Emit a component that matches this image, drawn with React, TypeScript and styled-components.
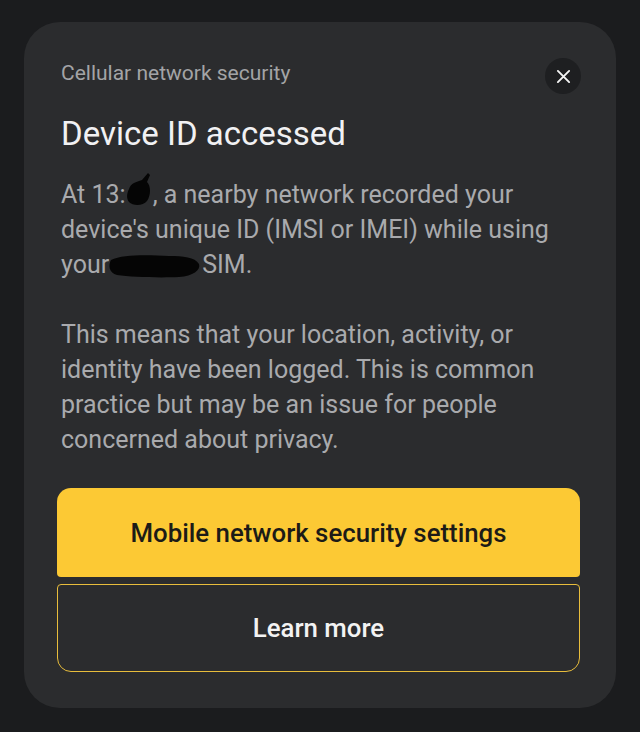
import React from "react";
import styled, { createGlobalStyle } from "styled-components";

const GlobalStyle = createGlobalStyle`
  html, body {
    margin: 0;
    padding: 0;
    background: #1b1c1e;
  }
  body {
    font-family: Roboto, "Noto Sans", sans-serif;
  }
`;

const Page = styled.div`
  width: 640px;
  height: 732px;
  box-sizing: border-box;
  padding: 22px 24px 24px;
  background: #1b1c1e;
`;

const Card = styled.section`
  background: #2b2c2e;
  border-radius: 36px;
  padding: 36px 36px 36px 37px;
  display: flex;
  flex-direction: column;
`;

const Header = styled.div`
  display: flex;
  justify-content: space-between;
  align-items: center;
  height: 36px;
`;

const Eyebrow = styled.div`
  font-size: 21px;
  color: #a3a4a6;
  padding-bottom: 6px;
`;

const CloseButton = styled.button`
  width: 36px;
  height: 36px;
  border-radius: 50%;
  border: none;
  background: #1e1f21;
  display: flex;
  align-items: center;
  justify-content: center;
  padding: 0;
  margin-right: -1px;
`;

const Title = styled.h1`
  margin: 20px 0 0;
  font-size: 33px;
  line-height: 39px;
  font-weight: 400;
  color: #f1f1f3;
`;

const Body = styled.p<{ $top: number }>`
  margin: ${(p) => p.$top}px 0 0;
  font-size: 25px;
  line-height: 35px;
  color: #a9aaad;
  width: 530px;
`;

/* ink blot drawn over redacted parts; overflow keeps the tail out of the line box */
const Blot = styled.svg`
  display: inline-block;
  vertical-align: -4px;
  overflow: visible;
  margin-right: 1px;
`;

const Actions = styled.div`
  display: flex;
  flex-direction: column;
  gap: 7px;
  margin-top: 31px;
  margin-left: -4px;
`;

const Button = styled.button<{ $primary?: boolean }>`
  height: ${(p) => (p.$primary ? 89 : 88)}px;
  width: 523px;
  box-sizing: border-box;
  font-family: Roboto, "Noto Sans", sans-serif;
  font-size: 25.8px;
  font-weight: 500;
  border-radius: ${(p) => (p.$primary ? "14px 14px 4px 4px" : "4px 4px 14px 14px")};
  border: ${(p) => (p.$primary ? "none" : "1.5px solid #e8bd3c")};
  background: ${(p) => (p.$primary ? "#fcc934" : "#2b2c2e")};
  color: ${(p) => (p.$primary ? "#1c1b17" : "#f3f3f3")};
`;

export default function App() {
  return (
    <Page>
      <GlobalStyle />
      <Card>
        <Header>
          <Eyebrow>Cellular network security</Eyebrow>
          <CloseButton aria-label="Close">
            <svg width="15" height="15" viewBox="0 0 16 16">
              <path d="M2 2 L14 14 M14 2 L2 14" stroke="#f4f4f4" strokeWidth="2" strokeLinecap="round" />
            </svg>
          </CloseButton>
        </Header>
        <Title>Device ID accessed</Title>
        <Body $top={24}>
          At 13:
          <Blot width="26" height="24" viewBox="0 10 26 24">
            <path d="M3 16 C5 10 10 9 16 7 L22 0 L24 2 L21 9 C25 13 25 22 21 28 C17 33 7 33 3 29 C0 25 1 20 3 16 Z" fill="#050505" />
          </Blot>
          , a nearby network recorded your device's unique ID (IMSI or IMEI) while using your
          <Blot width="92" height="24" viewBox="0 1 92 24">
            <path d="M2 8 C14 2 40 3 60 4 C74 4 86 5 90 12 C92 18 84 24 70 25 C50 26 22 25 8 23 C0 21 -1 13 2 8 Z" fill="#050505" />
          </Blot>
          SIM.
        </Body>
        <Body $top={35}>
          This means that your location, activity, or identity have been logged. This is common practice but may be
          an issue for people concerned about privacy.
        </Body>
        <Actions>
          <Button $primary>Mobile network security settings</Button>
          <Button>Learn more</Button>
        </Actions>
      </Card>
    </Page>
  );
}
